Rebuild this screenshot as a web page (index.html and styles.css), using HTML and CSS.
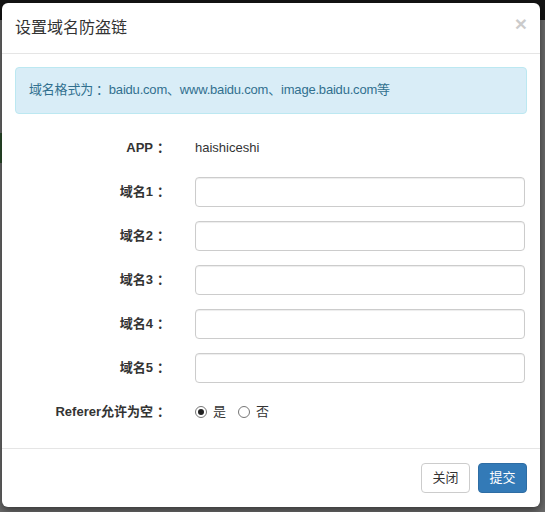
FILE: index.html
```html
<!DOCTYPE html>
<html lang="zh-CN">
<head>
<meta charset="utf-8">
<title>设置域名防盗链</title>
<link rel="stylesheet" href="styles.css">
</head>
<body>
<div class="page">
  <div class="topbar"></div>
  <div class="side-accent"></div>
</div>
<div class="modal">
  <div class="modal-header">
    <h4 class="modal-title">设置域名防盗链</h4>
    <button class="close" type="button">×</button>
  </div>
  <div class="modal-body">
    <div class="alert">域名格式为<span class="colon">：</span>baidu.com、www.baidu.com、image.baidu.com等</div>
    <form class="form">
      <div class="form-group">
        <label class="control-label">APP<span class="colon">：</span></label>
        <div class="static">haishiceshi</div>
      </div>
      <div class="form-group">
        <label class="control-label">域名1<span class="colon">：</span></label>
        <input class="form-control" type="text">
      </div>
      <div class="form-group">
        <label class="control-label">域名2<span class="colon">：</span></label>
        <input class="form-control" type="text">
      </div>
      <div class="form-group">
        <label class="control-label">域名3<span class="colon">：</span></label>
        <input class="form-control" type="text">
      </div>
      <div class="form-group">
        <label class="control-label">域名4<span class="colon">：</span></label>
        <input class="form-control" type="text">
      </div>
      <div class="form-group">
        <label class="control-label">域名5<span class="colon">：</span></label>
        <input class="form-control" type="text">
      </div>
      <div class="form-group">
        <label class="control-label">Referer允许为空<span class="colon">：</span></label>
        <div class="radios">
          <label class="radio"><input type="radio" name="referer" checked><span>是</span></label>
          <label class="radio"><input type="radio" name="referer"><span>否</span></label>
        </div>
      </div>
    </form>
  </div>
  <div class="modal-footer">
    <button class="btn btn-default" type="button">关闭</button>
    <button class="btn btn-primary" type="button">提交</button>
  </div>
</div>
</body>
</html>
```
FILE: styles.css
```css
html, body {
  margin: 0;
  padding: 0;
}
body {
  width: 545px;
  height: 512px;
  overflow: hidden;
  background: #6a6a6a;
  font-family: "Liberation Sans", "Noto Sans CJK SC", sans-serif;
  font-size: 13px;
  line-height: 20px;
  color: #333;
}
.page {
  height: 512px;
}
.topbar {
  height: 20px;
  background: #141414;
}
.side-accent {
  margin-top: 113px;
  width: 60px;
  height: 30px;
  background: #2b4d2b;
}
.modal {
  position: absolute;
  left: 2px;
  top: 3px;
  width: 538px;
  height: 504px;
  background: #fff;
  border-radius: 6px;
  box-shadow: 0 3px 9px rgba(0, 0, 0, .5);
  display: flex;
  flex-direction: column;
  box-sizing: border-box;
}
.modal-header {
  display: flex;
  justify-content: space-between;
  align-items: flex-start;
  padding: 15px 13px 15px 13px;
  border-bottom: 1px solid #e5e5e5;
}
.modal-title {
  margin: 0;
  font-size: 16px;
  line-height: 20px;
  font-weight: normal;
  color: #333;
}
.close {
  border: 0;
  background: transparent;
  padding: 0;
  margin-top: -5px;
  font-family: "Liberation Sans", sans-serif;
  font-size: 21px;
  font-weight: bold;
  line-height: 1;
  color: #000;
  opacity: .2;
}
.colon {
  margin-left: 4px;
  margin-right: -4px;
}
.alert .colon {
  margin-left: 3px;
  margin-right: 0;
}
.modal-body {
  padding: 13px 13px 7px 13px;
  flex: 1;
}
.alert {
  padding: 12px 13px 13px 13px;
  margin-bottom: 19px;
  background: #d9edf7;
  border: 1px solid #bce8f1;
  border-radius: 4px;
  color: #31708f;
  line-height: 20px;
  height: 20px;
  letter-spacing: -0.2px;
}
.form {
  margin: 0 2px 0 0;
}
.form-group {
  display: grid;
  grid-template-columns: 151px 1fr;
  column-gap: 29px;
  align-items: center;
  height: 30px;
  margin-bottom: 14px;
}
.control-label {
  text-align: right;
  font-weight: bold;
  color: #333;
}
.static {
  color: #333;
}
.form-control {
  display: block;
  box-sizing: border-box;
  width: 100%;
  height: 30px;
  margin: 0;
  padding: 5px 10px;
  border: 1px solid #ccc;
  border-radius: 4px;
  box-shadow: inset 0 1px 1px rgba(0, 0, 0, .075);
  font: inherit;
  background: #fff;
}
.radios {
  display: flex;
  align-items: center;
  gap: 12px;
}
.radio {
  display: flex;
  align-items: center;
  gap: 6px;
  color: #333;
}
.radio input {
  appearance: none;
  -webkit-appearance: none;
  margin: 0;
  width: 12px;
  height: 12px;
  border: 1px solid #767676;
  border-radius: 50%;
  box-sizing: border-box;
  background: #fff;
  display: grid;
  place-items: center;
}
.radio input:checked::after {
  content: "";
  width: 6px;
  height: 6px;
  border-radius: 50%;
  background: #222;
}
.modal-footer {
  display: flex;
  justify-content: flex-end;
  gap: 8px;
  padding: 14px 13px 14px 13px;
  border-top: 1px solid #e5e5e5;
}
.btn {
  box-sizing: border-box;
  height: 30px;
  padding: 0 10px;
  min-width: 49px;
  font: inherit;
  line-height: 28px;
  border: 1px solid transparent;
  border-radius: 4px;
}
.btn-default {
  background: #fff;
  border-color: #ccc;
  color: #333;
}
.btn-primary {
  background: #337ab7;
  border-color: #2e6da4;
  color: #fff;
}
```
